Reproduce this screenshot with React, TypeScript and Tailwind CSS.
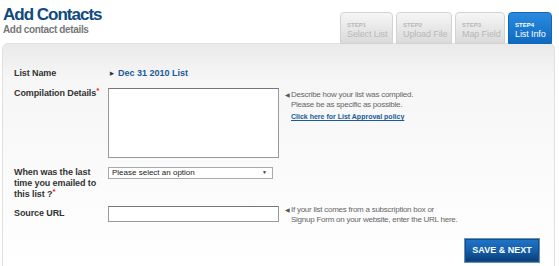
import { ReactNode } from "react";

const steps = [
  { step: "STEP1", label: "Select List", w: "w-[53px]", active: false },
  { step: "STEP2", label: "Upload File", w: "w-[56px]", active: false },
  { step: "STEP3", label: "Map Field", w: "w-[50px]", active: false },
  { step: "STEP4", label: "List Info", w: "w-[44px]", active: true },
];

function Label({ children }: { children: ReactNode }) {
  return <div className="w-[94px] shrink-0 text-[9px] font-bold leading-[11px] text-[#333] tracking-[-0.1px]">{children}</div>;
}

function Req() {
  return <span className="relative top-[-3px] text-[#d22] text-[8px] font-bold leading-none">*</span>;
}

function Hint({ children }: { children: ReactNode }) {
  return (
    <div className="flex text-[8px] leading-[10px] text-[#666] tracking-[-0.25px]">
      <span className="w-[6px] shrink-0 text-[6px] text-[#555]">◀</span>
      <div>{children}</div>
    </div>
  );
}

export default function App() {
  return (
    <div className="w-[559px] h-[266px] bg-white overflow-hidden" style={{ fontFamily: '"Liberation Sans", Arial, sans-serif' }}>
      {/* Header */}
      <div className="flex items-end justify-between pl-[3px] pr-[7px] h-[43px]">
        <div className="self-start pt-[5px]">
          <h1 className="text-[17px] font-bold leading-[19px] text-[#0f4a80] tracking-[-1px]">Add Contacts</h1>
          <p className="text-[10px] font-bold leading-[11px] text-[#777] tracking-[-0.35px]">Add contact details</p>
        </div>
        <div className="flex gap-[3px] mb-[-1px]">
          {steps.map((s) => (
            <div
              key={s.step}
              className={
                (s.active
                  ? "border-[#1466b4] from-[#2a8be0] to-[#0e69c2] text-white"
                  : "border-[#d2d2d2] from-[#f6f6f6] to-[#dadada] text-[#b8b8b8]") +
                " " +
                s.w +
                " h-[32px] rounded-t-[4px] border bg-gradient-to-b pl-[6px] pt-[9px]"
              }
            >
              <div className="text-[6px] font-bold leading-[7px]">{s.step}</div>
              <div className="text-[9px] leading-[10px] whitespace-nowrap tracking-[-0.1px]">{s.label}</div>
            </div>
          ))}
        </div>
      </div>

      {/* Panel */}
      <div className="mx-[2px] w-[553px] h-[230px] rounded-t-[6px] border border-[#e0e0e0] bg-gradient-to-b from-[#eaeaea] via-[#f6f6f6] via-[15%] to-white pl-[11px] pr-[13px] pt-[23px]">
        <div className="flex items-center">
          <Label>List Name</Label>
          <div className="text-[9px] font-bold text-[#1a5a9a] leading-[12px] ml-[2px]">
            <span className="text-[5px] text-[#333] mr-[4px] relative top-[-1px]">▶</span>Dec 31 2010 List
          </div>
        </div>

        <div className="flex mt-[8px]">
          <Label>
            Compilation Details<Req />
          </Label>
          <div className="w-[171px] h-[70px] border border-[#999] border-t-[#777] bg-white shrink-0" />
          <div className="ml-[6px] pt-[2px]">
            <Hint>
              Describe how your list was compiled.
              <br />
              Please be as specific as possible.
            </Hint>
            <div className="ml-[6px] mt-[2px] text-[7px] font-bold underline text-[#1a5a9a] leading-[10px]">
              Click here for List Approval policy
            </div>
          </div>
        </div>

        <div className="flex mt-[9px]">
          <Label>
            When was the last
            <br />
            time you emailed to
            <br />
            this list ?<Req />
          </Label>
          <div className="w-[165px] h-[12px] border border-[#aaa] bg-white flex items-center justify-between pl-[3px] pr-[5px] text-[8px] text-[#222]">
            <span>Please select an option</span>
            <span className="text-[5px] text-[#333]">▼</span>
          </div>
        </div>

        <div className="flex mt-[6px] items-start">
          <div className="pt-[2px]">
            <Label>Source URL</Label>
          </div>
          <div className="w-[171px] h-[16px] border border-[#999] border-t-[#777] bg-white shrink-0" />
          <div className="ml-[6px] mt-[-1px]">
            <Hint>
              If your list comes from a subscription box or
              <br />
              Signup Form on your website, enter the URL here.
            </Hint>
          </div>
        </div>

        <div className="flex justify-end mt-[13px] pr-[1px]">
          <div className="w-[76px] h-[25px] border border-[#6b8fb5] bg-[#134f8c] p-[1px]">
            <div className="w-full h-full bg-gradient-to-b from-[#1f74c6] via-[#165ea8] via-[50%] to-[#0b3f78] flex items-center justify-center text-[9px] font-bold text-white">
              SAVE &amp; NEXT
            </div>
          </div>
        </div>
      </div>
    </div>
  );
}
